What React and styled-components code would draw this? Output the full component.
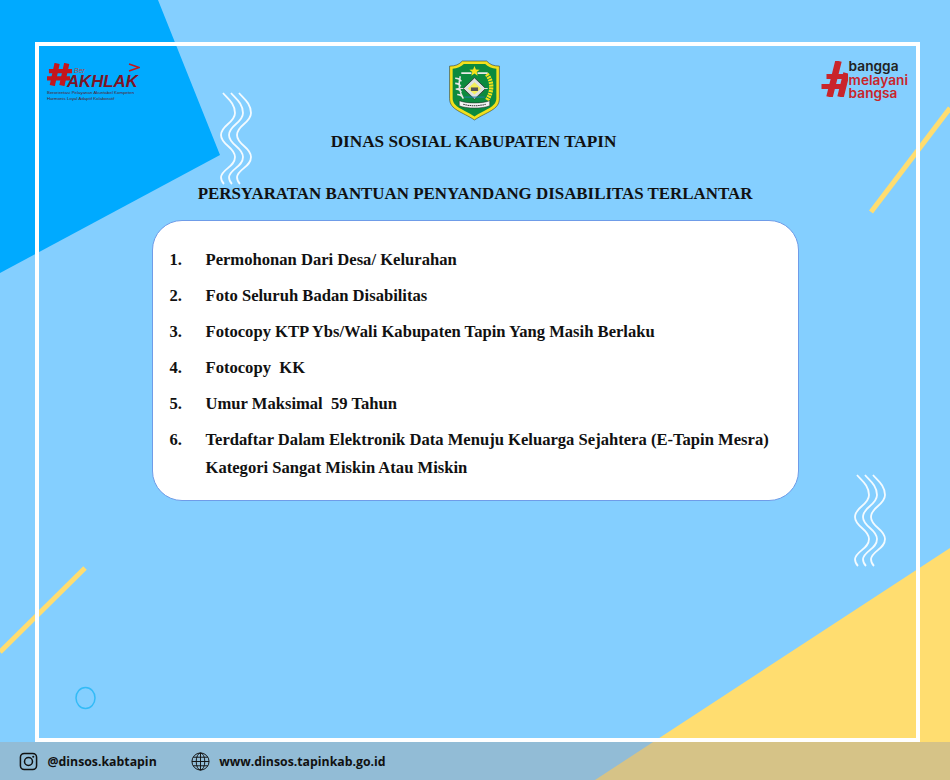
import React from 'react'
import styled, { createGlobalStyle } from 'styled-components'

const requirements = [
  ['Permohonan Dari Desa/ Kelurahan'],
  ['Foto Seluruh Badan Disabilitas'],
  ['Fotocopy KTP Ybs/Wali Kabupaten Tapin Yang Masih Berlaku'],
  ['Fotocopy  KK'],
  ['Umur Maksimal  59 Tahun'],
  ['Terdaftar Dalam Elektronik Data Menuju Keluarga Sejahtera (E-Tapin Mesra)', 'Kategori Sangat Miskin Atau Miskin'],
]

const wave = 'c4 5 12 10 12 20 c0 10 -14 12 -14 22 c0 10 14 12 14 22 c0 10 -13 12 -14 20 c0 3 1 5 3 7'

const App = () => {
  return (
    <Page>
      <GlobalStyle />
      <Backdrop />
      <Frame>
        <Header>
          <AkhlakLogo />
          <Crest />
          <BanggaLogo />
        </Header>
        <Title>DINAS SOSIAL KABUPATEN TAPIN</Title>
        <Subtitle>PERSYARATAN BANTUAN PENYANDANG DISABILITAS TERLANTAR</Subtitle>
        <Card>
          {requirements.map((lines, i) => (
            <Row key={i}>
              <Num>{i + 1}.</Num>
              <div>
                {lines.map(line => <Line key={line}>{line}</Line>)}
              </div>
            </Row>
          ))}
        </Card>
      </Frame>
      <Footer>
        <FooterItem>
          <InstagramIcon />
          <span>@dinsos.kabtapin</span>
        </FooterItem>
        <FooterItem>
          <GlobeIcon />
          <span>www.dinsos.tapinkab.go.id</span>
        </FooterItem>
      </Footer>
    </Page>
  )
}

export default App

const Backdrop = () => (
  <BackdropSvg viewBox="0 0 950 780" aria-hidden="true">
    <polygon points="0,0 158,0 220,155 0,273" fill="#00aaff" />
    <polygon points="950,548 595,780 950,780" fill="#ffdd70" />
    <path d="M871 212 L950 108" stroke="#ffdd70" strokeWidth="5" />
    <path d="M0 652 L85 568" stroke="#ffdd70" strokeWidth="5" />
    <g fill="none" stroke="#fff" strokeWidth="1.8" strokeOpacity="0.9">
      <path d={`M223 93 ${wave}`} />
      <path d={`M231 93 ${wave}`} />
      <path d={`M239 93 ${wave}`} />
      <path d={`M857 475 ${wave}`} />
      <path d={`M865 475 ${wave}`} />
      <path d={`M873 475 ${wave}`} />
    </g>
    <ellipse cx="85.500" cy="698" rx="9.500" ry="10.500" fill="none" stroke="#33bbf7" strokeWidth="1.500" />
  </BackdropSvg>
)

const AkhlakLogo = () => (
  <Akhlak>
    <AkhlakHash viewBox="0 0 26 23">
      <path d="M10.500 0L5.500 23M20.500 0L15.500 23" stroke="#c4161c" strokeWidth="5.500" fill="none" />
      <path d="M2 8H26M0 15.500H24" stroke="#c4161c" strokeWidth="4.500" fill="none" />
    </AkhlakHash>
    <Ber>Ber</Ber>
    <Arrow viewBox="0 0 12 10"><path d="M1 1l10 3.500L1 8" fill="none" stroke="#c4161c" strokeWidth="1.400" /></Arrow>
    <AkhlakWord>AKHLAK</AkhlakWord>
    <AkhlakNote>Berorientasi Pelayanan Akuntabel Kompeten</AkhlakNote>
    <AkhlakNote>Harmonis Loyal Adaptif Kolaboratif</AkhlakNote>
  </Akhlak>
)

const Crest = () => (
  <CrestSvg viewBox="0 0 52 60">
    <path d="M1.500 6 C7 6 11 4.500 14 1 L38 1 C41 4.500 45 6 50.500 6 L50.500 38 C50.500 49 38 51 26 59 C14 51 1.500 49 1.500 38Z" fill="#f2e01e" stroke="#123" strokeWidth=".5" />
    <path d="M4.500 8.500 C9 8.500 13 6.500 15.500 4 L36.500 4 C39 6.500 43 8.500 47.500 8.500 L47.500 37.500 C47.500 46.500 36 48.500 26 55.500 C16 48.500 4.500 46.500 4.500 37.500Z" fill="#0c8a3e" />
    <path d="M26 6l1.400 3.400 3.600.2-2.800 2.300.9 3.500-3.100-2-3.100 2 .9-3.500-2.800-2.300 3.600-.2z" fill="#f4e21c" />
    <path d="M13 12h10v1.800H13zM29 12h10v1.800H29z" fill="#e8e8e8" />
    <path d="M26 17.500 L37 28 L26 38.500 L15 28Z" fill="#dfe3e0" stroke="#2e2e2e" strokeWidth=".8" />
    <path d="M26 22 L32.500 28 L26 34 L19.500 28Z" fill="#f4ef5a" />
    <path d="M22.500 27h7v3.500h-7z" fill="#555" />
    <path d="M12 16c-2 7-1 15 3 22M7 18c3 0 5 1 6 3M7 23c3 0 4.500 1 5.500 3M7.500 28.500c3 0 4.500 1 5.500 3M9 34c3 0 4.500 1 5.500 3" fill="none" stroke="#e6e6e6" strokeWidth="1.500" />
    <path d="M38 14c6 7 6 17 0 26" fill="none" stroke="#f4e21c" strokeWidth="4.200" strokeDasharray="2 .8" />
    <path d="M9 28h6M36 28h3" stroke="#ddd" strokeWidth="1" />
    <path d="M16 36.500h20" stroke="#1c7fa8" strokeWidth="1" />
    <path d="M11 40 C18 43 34 43 41 40 L41 45 C34 48 18 48 11 45Z" fill="#f3f3f3" stroke="#222" strokeWidth=".5" />
    <path d="M15 43.500 C22 45.500 30 45.500 37 43.500" fill="none" stroke="#333" strokeWidth="1" strokeDasharray="1.500 .6" />
  </CrestSvg>
)

const BanggaLogo = () => (
  <Bangga>
    <BanggaHash viewBox="0 0 26 36">
      <path d="M17 0L8 36M25 12L19 36" stroke="#c9252b" strokeWidth="6.500" fill="none" />
      <path d="M5 15.500H26M0 25.500H22" stroke="#c9252b" strokeWidth="5" fill="none" />
    </BanggaHash>
    <BanggaWords>
      <BanggaWord $dark>bangga</BanggaWord>
      <BanggaWord>melayani</BanggaWord>
      <BanggaWord>bangsa</BanggaWord>
    </BanggaWords>
  </Bangga>
)

const InstagramIcon = () => (
  <FooterSvg viewBox="0 0 20 20">
    <g fill="none" stroke="#111" strokeWidth="1.600">
      <rect x="1.500" y="1.500" width="17" height="17" rx="4" />
      <circle cx="10" cy="10" r="4.200" />
    </g>
    <circle cx="15" cy="5" r="1.100" fill="#111" />
  </FooterSvg>
)

const GlobeIcon = () => (
  <FooterSvg viewBox="0 0 20 20">
    <g fill="none" stroke="#111" strokeWidth="1">
      <circle cx="10" cy="10" r="9" />
      <ellipse cx="10" cy="10" rx="4.500" ry="9" />
      <path d="M10 1v18M1 10h18M2.300 5.500h15.400M2.300 14.500h15.400" />
    </g>
  </FooterSvg>
)

const GlobalStyle = createGlobalStyle`
  html, body {
    margin: 0;
    padding: 0;
  }
`

const Page = styled.div`
  position: relative;
  width: 950px;
  height: 780px;
  overflow: hidden;
  display: flex;
  flex-direction: column;
  background: #84cfff;
  font-family: "Liberation Serif", serif;
`

const BackdropSvg = styled.svg`
  position: absolute;
  inset: 0;
  width: 950px;
  height: 780px;
`

const Frame = styled.main`
  position: relative;
  box-sizing: border-box;
  width: 885px;
  height: 700px;
  margin: 42px 0 0 35px;
  border: 4px solid #fff;
  display: flex;
  flex-direction: column;
  align-items: center;
`

const Header = styled.header`
  box-sizing: border-box;
  width: 100%;
  height: 77px;
  padding: 14px 8px 0;
  display: grid;
  grid-template-columns: 401px 53px 1fr;
  align-items: start;
`

const Akhlak = styled.div`
  position: relative;
  height: 42px;
  padding-top: 30px;
  box-sizing: border-box;
  color: #7b1418;
  font-family: "Liberation Sans", sans-serif;
`

const AkhlakHash = styled.svg`
  position: absolute;
  left: 0;
  top: 3px;
  width: 25px;
  height: 23px;
`

const Ber = styled.span`
  position: absolute;
  left: 27px;
  top: 7px;
  font-size: 7px;
  line-height: 8px;
  font-style: italic;
  color: #a04a4a;
`

const Arrow = styled.svg`
  position: absolute;
  left: 81px;
  top: 3px;
  width: 12px;
  height: 10px;
`

const AkhlakWord = styled.div`
  position: absolute;
  left: 20px;
  top: 14px;
  font-size: 16.800px;
  line-height: 16px;
  font-weight: 700;
  font-style: italic;
  color: #7d1426;
`

const AkhlakNote = styled.div`
  font-size: 4.400px;
  line-height: 5.500px;
  white-space: nowrap;
  color: #5b1a1f;
`

const CrestSvg = styled.svg`
  display: block;
  width: 53px;
  height: 61px;
`

const Bangga = styled.div`
  justify-self: end;
  display: flex;
  align-items: center;
  gap: 1px;
  margin-top: -1px;
  font-family: "Inter", "Liberation Sans", sans-serif;
`

const BanggaHash = styled.svg`
  display: block;
  flex: none;
  width: 27px;
  height: 36px;
`

const BanggaWords = styled.div`
  display: flex;
  flex-direction: column;
`

const BanggaWord = styled.span`
  font-size: 13.700px;
  line-height: 14px;
  height: 13.500px;
  font-weight: 600;
  color: ${p => (p.$dark ? '#222' : '#c9252b')};
`

const Title = styled.h1`
  margin: 8px 0 0 -8px;
  font-size: 17.200px;
  line-height: 22px;
  font-weight: 700;
  color: #111;
`

const Subtitle = styled.h2`
  margin: 30px 0 0 -5px;
  font-size: 16.900px;
  line-height: 22px;
  font-weight: 700;
  color: #111;
`

const Card = styled.section`
  box-sizing: border-box;
  width: 647px;
  height: 281px;
  margin: 15px 0 0 -5px;
  padding: 24.500px 17px 0;
  background: #fff;
  border: 1px solid #6f9ce8;
  border-radius: 30px;
`

const Row = styled.div`
  display: flex;
  margin-bottom: 8px;
  font-size: 16.600px;
  line-height: 28px;
  font-weight: 700;
  color: #111;
`

const Num = styled.span`
  flex: none;
  width: 36px;
`

const Line = styled.div`
  white-space: pre;
`

const Footer = styled.footer`
  position: relative;
  height: 38px;
  box-sizing: border-box;
  padding-left: 19px;
  display: flex;
  align-items: center;
  gap: 34px;
  background: rgba(163, 163, 163, 0.45);
  font-family: "Open Sans", "Noto Sans", sans-serif;
  font-size: 12.300px;
  font-weight: 700;
  color: #111;
`

const FooterItem = styled.div`
  display: flex;
  align-items: center;
  gap: 9.500px;
`

const FooterSvg = styled.svg`
  display: block;
  width: 19px;
  height: 19px;
`
